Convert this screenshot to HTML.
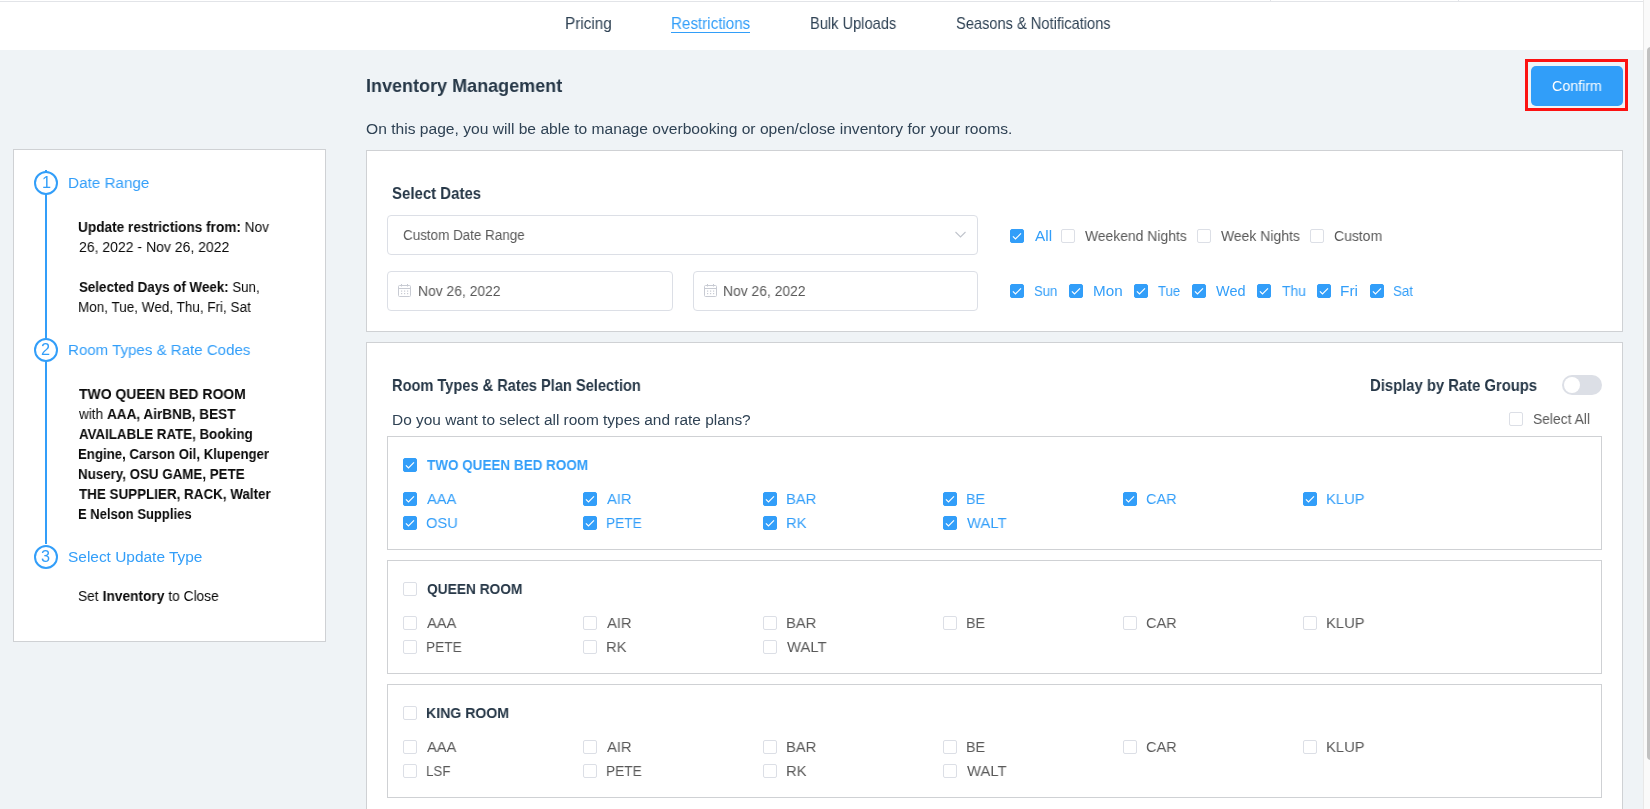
<!DOCTYPE html>
<html><head><meta charset="utf-8"><style>
html,body{margin:0;padding:0;width:1650px;height:809px;overflow:hidden;background:#eff3f6;font-family:"Liberation Sans",sans-serif;}
.abs{position:absolute;}
.t{position:absolute;white-space:nowrap;will-change:transform;}
.t b,.t.sb{font-weight:700}.t{transform-origin:0 0}
.box{position:absolute;box-sizing:border-box;background:#fff;}
.cb{position:absolute;width:14px;height:14px;box-sizing:border-box;border:1px solid #dcdfe6;border-radius:2px;background:#fff;}
.cb.on{background:#329ef9;border-color:#329ef9;}
.cb svg{position:absolute;left:-1px;top:-1px;}
</style></head><body>
<div class="box" style="left:0;top:0;width:1643px;height:50px;"></div>
<div class="abs" style="left:0;top:1px;width:1643px;height:1px;background:#e2e4e8"></div>
<div class="abs" style="left:1270px;top:0;width:1px;height:2px;background:#e2e4e8"></div>
<div class="abs" style="left:1458px;top:0;width:1px;height:2px;background:#e2e4e8"></div>
<div class="abs" style="left:671px;top:31.5px;width:79px;height:1.2px;background:#329ef9"></div>
<!-- scrollbar -->
<div class="abs" style="left:1643px;top:0;width:7px;height:809px;background:#fafafa;border-left:1px solid #e8e8e8;box-sizing:border-box"></div>
<div class="abs" style="left:1647px;top:47px;width:8px;height:713px;background:#c1c1c1;border-radius:4px"></div>
<!-- sidebar -->
<div class="box" style="left:13px;top:149px;width:313px;height:493px;border:1px solid #cfd1d4"></div>
<div class="abs" style="left:45px;top:170px;width:2px;height:374px;background:#329ef9"></div>
<div class="abs" style="left:34px;top:170.5px;width:24px;height:24px;box-sizing:border-box;border:2px solid #329ef9;border-radius:50%;background:#fff"></div>
<div class="abs" style="left:34px;top:337.6px;width:24px;height:24px;box-sizing:border-box;border:2px solid #329ef9;border-radius:50%;background:#fff"></div>
<div class="abs" style="left:34px;top:544.6px;width:24px;height:24px;box-sizing:border-box;border:2px solid #329ef9;border-radius:50%;background:#fff"></div>
<!-- confirm -->
<div class="abs" style="left:1525px;top:59px;width:103px;height:52px;box-sizing:border-box;border:3px solid #fc1212"></div>
<div class="abs" style="left:1531px;top:66px;width:92px;height:40px;border-radius:5px;background:#319ef9"></div>
<!-- select dates card -->
<div class="box" style="left:366px;top:150px;width:1257px;height:182px;border:1px solid #cfd1d4"></div>
<div class="box" style="left:387px;top:215px;width:591px;height:40px;border:1px solid #dcdfe6;border-radius:4px"></div>
<svg class="abs" style="left:954px;top:230px" width="13" height="9" viewBox="0 0 13 9"><path d="M1.5 2 L6.5 7 L11.5 2" fill="none" stroke="#c0c4cc" stroke-width="1.1"/></svg>
<div class="box" style="left:387px;top:271px;width:286px;height:40px;border:1px solid #dcdfe6;border-radius:4px"></div>
<div class="box" style="left:693px;top:271px;width:285px;height:40px;border:1px solid #dcdfe6;border-radius:4px"></div>
<svg class='abs' style='left:398px;top:284px' width='13' height='13' viewBox='0 0 13 13'><rect x='0.5' y='1.5' width='12' height='11' rx='1' fill='none' stroke='#c8cbd3'/><line x1='0.5' y1='4.5' x2='12.5' y2='4.5' stroke='#c8cbd3'/><line x1='3.5' y1='0' x2='3.5' y2='2.5' stroke='#c8cbd3'/><line x1='9.5' y1='0' x2='9.5' y2='2.5' stroke='#c8cbd3'/><g fill='#c8cbd3'><rect x='3' y='6.5' width='1.2' height='1.2'/><rect x='6' y='6.5' width='1.2' height='1.2'/><rect x='9' y='6.5' width='1.2' height='1.2'/><rect x='3' y='9' width='1.2' height='1.2'/><rect x='6' y='9' width='1.2' height='1.2'/><rect x='9' y='9' width='1.2' height='1.2'/></g></svg><svg class='abs' style='left:703.6px;top:284px' width='13' height='13' viewBox='0 0 13 13'><rect x='0.5' y='1.5' width='12' height='11' rx='1' fill='none' stroke='#c8cbd3'/><line x1='0.5' y1='4.5' x2='12.5' y2='4.5' stroke='#c8cbd3'/><line x1='3.5' y1='0' x2='3.5' y2='2.5' stroke='#c8cbd3'/><line x1='9.5' y1='0' x2='9.5' y2='2.5' stroke='#c8cbd3'/><g fill='#c8cbd3'><rect x='3' y='6.5' width='1.2' height='1.2'/><rect x='6' y='6.5' width='1.2' height='1.2'/><rect x='9' y='6.5' width='1.2' height='1.2'/><rect x='3' y='9' width='1.2' height='1.2'/><rect x='6' y='9' width='1.2' height='1.2'/><rect x='9' y='9' width='1.2' height='1.2'/></g></svg>
<!-- room card -->
<div class="box" style="left:366px;top:342px;width:1257px;height:500px;border:1px solid #cfd1d4"></div>
<div class="abs" style="left:1562px;top:375px;width:40px;height:20px;border-radius:10px;background:#dcdfe6"></div>
<div class="abs" style="left:1564px;top:377px;width:16px;height:16px;border-radius:50%;background:#fff"></div>
<div class="box" style="left:387px;top:436px;width:1215px;height:114px;border:1px solid #cfd1d4"></div>
<div class="box" style="left:387px;top:560px;width:1215px;height:114px;border:1px solid #cfd1d4"></div>
<div class="box" style="left:387px;top:684px;width:1215px;height:114px;border:1px solid #cfd1d4"></div>
<div class='cb on' style='left:1010px;top:229px'><svg width='14' height='14' viewBox='0 0 14 14'><path d='M2.9 7.3 L5.5 10.0 L11 4.3' fill='none' stroke='#fff' stroke-width='1.15'/></svg></div><div class='cb' style='left:1061px;top:229px'></div><div class='cb' style='left:1197px;top:229px'></div><div class='cb' style='left:1310px;top:229px'></div><div class='cb on' style='left:1010px;top:284px'><svg width='14' height='14' viewBox='0 0 14 14'><path d='M2.9 7.3 L5.5 10.0 L11 4.3' fill='none' stroke='#fff' stroke-width='1.15'/></svg></div><div class='cb on' style='left:1069px;top:284px'><svg width='14' height='14' viewBox='0 0 14 14'><path d='M2.9 7.3 L5.5 10.0 L11 4.3' fill='none' stroke='#fff' stroke-width='1.15'/></svg></div><div class='cb on' style='left:1134px;top:284px'><svg width='14' height='14' viewBox='0 0 14 14'><path d='M2.9 7.3 L5.5 10.0 L11 4.3' fill='none' stroke='#fff' stroke-width='1.15'/></svg></div><div class='cb on' style='left:1192px;top:284px'><svg width='14' height='14' viewBox='0 0 14 14'><path d='M2.9 7.3 L5.5 10.0 L11 4.3' fill='none' stroke='#fff' stroke-width='1.15'/></svg></div><div class='cb on' style='left:1257px;top:284px'><svg width='14' height='14' viewBox='0 0 14 14'><path d='M2.9 7.3 L5.5 10.0 L11 4.3' fill='none' stroke='#fff' stroke-width='1.15'/></svg></div><div class='cb on' style='left:1317px;top:284px'><svg width='14' height='14' viewBox='0 0 14 14'><path d='M2.9 7.3 L5.5 10.0 L11 4.3' fill='none' stroke='#fff' stroke-width='1.15'/></svg></div><div class='cb on' style='left:1370px;top:284px'><svg width='14' height='14' viewBox='0 0 14 14'><path d='M2.9 7.3 L5.5 10.0 L11 4.3' fill='none' stroke='#fff' stroke-width='1.15'/></svg></div><div class='cb' style='left:1509px;top:412px'></div><div class='cb on' style='left:403px;top:458px'><svg width='14' height='14' viewBox='0 0 14 14'><path d='M2.9 7.3 L5.5 10.0 L11 4.3' fill='none' stroke='#fff' stroke-width='1.15'/></svg></div><div class='cb on' style='left:403px;top:492px'><svg width='14' height='14' viewBox='0 0 14 14'><path d='M2.9 7.3 L5.5 10.0 L11 4.3' fill='none' stroke='#fff' stroke-width='1.15'/></svg></div><div class='cb on' style='left:583px;top:492px'><svg width='14' height='14' viewBox='0 0 14 14'><path d='M2.9 7.3 L5.5 10.0 L11 4.3' fill='none' stroke='#fff' stroke-width='1.15'/></svg></div><div class='cb on' style='left:763px;top:492px'><svg width='14' height='14' viewBox='0 0 14 14'><path d='M2.9 7.3 L5.5 10.0 L11 4.3' fill='none' stroke='#fff' stroke-width='1.15'/></svg></div><div class='cb on' style='left:943px;top:492px'><svg width='14' height='14' viewBox='0 0 14 14'><path d='M2.9 7.3 L5.5 10.0 L11 4.3' fill='none' stroke='#fff' stroke-width='1.15'/></svg></div><div class='cb on' style='left:1123px;top:492px'><svg width='14' height='14' viewBox='0 0 14 14'><path d='M2.9 7.3 L5.5 10.0 L11 4.3' fill='none' stroke='#fff' stroke-width='1.15'/></svg></div><div class='cb on' style='left:1303px;top:492px'><svg width='14' height='14' viewBox='0 0 14 14'><path d='M2.9 7.3 L5.5 10.0 L11 4.3' fill='none' stroke='#fff' stroke-width='1.15'/></svg></div><div class='cb on' style='left:403px;top:516px'><svg width='14' height='14' viewBox='0 0 14 14'><path d='M2.9 7.3 L5.5 10.0 L11 4.3' fill='none' stroke='#fff' stroke-width='1.15'/></svg></div><div class='cb on' style='left:583px;top:516px'><svg width='14' height='14' viewBox='0 0 14 14'><path d='M2.9 7.3 L5.5 10.0 L11 4.3' fill='none' stroke='#fff' stroke-width='1.15'/></svg></div><div class='cb on' style='left:763px;top:516px'><svg width='14' height='14' viewBox='0 0 14 14'><path d='M2.9 7.3 L5.5 10.0 L11 4.3' fill='none' stroke='#fff' stroke-width='1.15'/></svg></div><div class='cb on' style='left:943px;top:516px'><svg width='14' height='14' viewBox='0 0 14 14'><path d='M2.9 7.3 L5.5 10.0 L11 4.3' fill='none' stroke='#fff' stroke-width='1.15'/></svg></div><div class='cb' style='left:403px;top:582px'></div><div class='cb' style='left:403px;top:616px'></div><div class='cb' style='left:583px;top:616px'></div><div class='cb' style='left:763px;top:616px'></div><div class='cb' style='left:943px;top:616px'></div><div class='cb' style='left:1123px;top:616px'></div><div class='cb' style='left:1303px;top:616px'></div><div class='cb' style='left:403px;top:640px'></div><div class='cb' style='left:583px;top:640px'></div><div class='cb' style='left:763px;top:640px'></div><div class='cb' style='left:403px;top:706px'></div><div class='cb' style='left:403px;top:740px'></div><div class='cb' style='left:583px;top:740px'></div><div class='cb' style='left:763px;top:740px'></div><div class='cb' style='left:943px;top:740px'></div><div class='cb' style='left:1123px;top:740px'></div><div class='cb' style='left:1303px;top:740px'></div><div class='cb' style='left:403px;top:764px'></div><div class='cb' style='left:583px;top:764px'></div><div class='cb' style='left:763px;top:764px'></div><div class='cb' style='left:943px;top:764px'></div>
<div class='t' style='left:564.84px;top:13.97px;font-size:15.96px;line-height:19px;color:#2f4254;transform:scaleX(0.9574)'>Pricing</div><div class='t' style='left:671.05px;top:13.97px;font-size:15.96px;line-height:19px;color:#329ef9;transform:scaleX(0.9512)'>Restrictions</div><div class='t' style='left:809.78px;top:13.97px;font-size:15.96px;line-height:19px;color:#2f4254;transform:scaleX(0.9172)'>Bulk Uploads</div><div class='t' style='left:956.18px;top:13.97px;font-size:15.96px;line-height:19px;color:#2f4254;transform:scaleX(0.9174)'>Seasons &amp; Notifications</div><div class='t sb' style='left:365.75px;top:73.90px;font-size:19.05px;line-height:23px;color:#263747;transform:scaleX(0.9466)'>Inventory Management</div><div class='t' style='left:365.69px;top:119.15px;font-size:15.45px;line-height:19px;color:#2f4254;transform:scaleX(1.0110)'>On this page, you will be able to manage overbooking or open/close inventory for your rooms.</div><div class='t' style='left:1552.20px;top:77.50px;font-size:14.42px;line-height:17px;color:#ffffff;transform:scaleX(0.9860)'>Confirm</div><div class='t sb' style='left:392.10px;top:183.29px;font-size:16.48px;line-height:20px;color:#263747;transform:scaleX(0.9093)'>Select Dates</div><div class='t' style='left:403.20px;top:226.50px;font-size:14.42px;line-height:17px;color:#595959;transform:scaleX(0.9323)'>Custom Date Range</div><div class='t' style='left:417.74px;top:282.50px;font-size:14.42px;line-height:17px;color:#595959;transform:scaleX(0.9619)'>Nov 26, 2022</div><div class='t' style='left:722.84px;top:282.50px;font-size:14.42px;line-height:17px;color:#595959;transform:scaleX(0.9619)'>Nov 26, 2022</div><div class='t' style='left:1034.80px;top:227.50px;font-size:14.42px;line-height:17px;color:#329ef9;transform:scaleX(1.0667)'>All</div><div class='t' style='left:1085.20px;top:227.50px;font-size:14.42px;line-height:17px;color:#595959;transform:scaleX(0.9648)'>Weekend Nights</div><div class='t' style='left:1220.90px;top:227.50px;font-size:14.42px;line-height:17px;color:#595959;transform:scaleX(0.9679)'>Week Nights</div><div class='t' style='left:1334.00px;top:227.50px;font-size:14.42px;line-height:17px;color:#595959;transform:scaleX(0.9694)'>Custom</div><div class='t' style='left:1033.89px;top:282.50px;font-size:14.42px;line-height:17px;color:#329ef9;transform:scaleX(0.9125)'>Sun</div><div class='t' style='left:1092.94px;top:282.50px;font-size:14.42px;line-height:17px;color:#329ef9;transform:scaleX(1.0577)'>Mon</div><div class='t' style='left:1158.00px;top:282.50px;font-size:14.42px;line-height:17px;color:#329ef9;transform:scaleX(0.9125)'>Tue</div><div class='t' style='left:1216.10px;top:282.50px;font-size:14.42px;line-height:17px;color:#329ef9;transform:scaleX(1.0034)'>Wed</div><div class='t' style='left:1281.50px;top:282.50px;font-size:14.42px;line-height:17px;color:#329ef9;transform:scaleX(0.9667)'>Thu</div><div class='t' style='left:1340.43px;top:282.50px;font-size:14.42px;line-height:17px;color:#329ef9;transform:scaleX(1.0667)'>Fri</div><div class='t' style='left:1393.07px;top:282.50px;font-size:14.42px;line-height:17px;color:#329ef9;transform:scaleX(0.9286)'>Sat</div><div class='t sb' style='left:391.71px;top:375.29px;font-size:16.48px;line-height:20px;color:#263747;transform:scaleX(0.8867)'>Room Types &amp; Rates Plan Selection</div><div class='t' style='left:391.60px;top:410.15px;font-size:15.45px;line-height:19px;color:#2f4254'>Do you want to select all room types and rate plans?</div><div class='t sb' style='left:1370.20px;top:375.29px;font-size:16.48px;line-height:20px;color:#263747;transform:scaleX(0.8995)'>Display by Rate Groups</div><div class='t' style='left:1532.74px;top:410.50px;font-size:14.42px;line-height:17px;color:#595959;transform:scaleX(0.9621)'>Select All</div><div class='t sb' style='left:427.30px;top:455.15px;font-size:15.45px;line-height:19px;color:#329ef9;transform:scaleX(0.8734)'>TWO QUEEN BED ROOM</div><div class='t' style='left:427.30px;top:489.15px;font-size:15.45px;line-height:19px;color:#329ef9;transform:scaleX(0.9516)'>AAA</div><div class='t' style='left:607.30px;top:489.15px;font-size:15.45px;line-height:19px;color:#329ef9;transform:scaleX(0.9600)'>AIR</div><div class='t' style='left:786.34px;top:489.15px;font-size:15.45px;line-height:19px;color:#329ef9;transform:scaleX(0.9567)'>BAR</div><div class='t' style='left:966.37px;top:489.15px;font-size:15.45px;line-height:19px;color:#329ef9;transform:scaleX(0.9263)'>BE</div><div class='t' style='left:1146.36px;top:489.15px;font-size:15.45px;line-height:19px;color:#329ef9;transform:scaleX(0.9387)'>CAR</div><div class='t' style='left:1326.34px;top:489.15px;font-size:15.45px;line-height:19px;color:#329ef9;transform:scaleX(0.9564)'>KLUP</div><div class='t' style='left:426.35px;top:513.15px;font-size:15.45px;line-height:19px;color:#329ef9;transform:scaleX(0.9516)'>OSU</div><div class='t' style='left:606.41px;top:513.15px;font-size:15.45px;line-height:19px;color:#329ef9;transform:scaleX(0.8872)'>PETE</div><div class='t' style='left:786.34px;top:513.15px;font-size:15.45px;line-height:19px;color:#329ef9;transform:scaleX(0.9550)'>RK</div><div class='t' style='left:967.30px;top:513.15px;font-size:15.45px;line-height:19px;color:#329ef9;transform:scaleX(0.9610)'>WALT</div><div class='t sb' style='left:427.30px;top:579.15px;font-size:15.45px;line-height:19px;color:#263747;transform:scaleX(0.8906)'>QUEEN ROOM</div><div class='t' style='left:427.30px;top:613.15px;font-size:15.45px;line-height:19px;color:#595959;transform:scaleX(0.9516)'>AAA</div><div class='t' style='left:607.30px;top:613.15px;font-size:15.45px;line-height:19px;color:#595959;transform:scaleX(0.9600)'>AIR</div><div class='t' style='left:786.34px;top:613.15px;font-size:15.45px;line-height:19px;color:#595959;transform:scaleX(0.9567)'>BAR</div><div class='t' style='left:966.37px;top:613.15px;font-size:15.45px;line-height:19px;color:#595959;transform:scaleX(0.9263)'>BE</div><div class='t' style='left:1146.36px;top:613.15px;font-size:15.45px;line-height:19px;color:#595959;transform:scaleX(0.9387)'>CAR</div><div class='t' style='left:1326.34px;top:613.15px;font-size:15.45px;line-height:19px;color:#595959;transform:scaleX(0.9564)'>KLUP</div><div class='t' style='left:426.41px;top:637.15px;font-size:15.45px;line-height:19px;color:#595959;transform:scaleX(0.8872)'>PETE</div><div class='t' style='left:606.34px;top:637.15px;font-size:15.45px;line-height:19px;color:#595959;transform:scaleX(0.9550)'>RK</div><div class='t' style='left:787.30px;top:637.15px;font-size:15.45px;line-height:19px;color:#595959;transform:scaleX(0.9610)'>WALT</div><div class='t sb' style='left:426.39px;top:703.15px;font-size:15.45px;line-height:19px;color:#263747;transform:scaleX(0.9135)'>KING ROOM</div><div class='t' style='left:427.30px;top:737.15px;font-size:15.45px;line-height:19px;color:#595959;transform:scaleX(0.9516)'>AAA</div><div class='t' style='left:607.30px;top:737.15px;font-size:15.45px;line-height:19px;color:#595959;transform:scaleX(0.9600)'>AIR</div><div class='t' style='left:786.34px;top:737.15px;font-size:15.45px;line-height:19px;color:#595959;transform:scaleX(0.9567)'>BAR</div><div class='t' style='left:966.37px;top:737.15px;font-size:15.45px;line-height:19px;color:#595959;transform:scaleX(0.9263)'>BE</div><div class='t' style='left:1146.36px;top:737.15px;font-size:15.45px;line-height:19px;color:#595959;transform:scaleX(0.9387)'>CAR</div><div class='t' style='left:1326.34px;top:737.15px;font-size:15.45px;line-height:19px;color:#595959;transform:scaleX(0.9564)'>KLUP</div><div class='t' style='left:426.44px;top:761.15px;font-size:15.45px;line-height:19px;color:#595959;transform:scaleX(0.8630)'>LSF</div><div class='t' style='left:606.41px;top:761.15px;font-size:15.45px;line-height:19px;color:#595959;transform:scaleX(0.8872)'>PETE</div><div class='t' style='left:786.34px;top:761.15px;font-size:15.45px;line-height:19px;color:#595959;transform:scaleX(0.9550)'>RK</div><div class='t' style='left:967.30px;top:761.15px;font-size:15.45px;line-height:19px;color:#595959;transform:scaleX(0.9610)'>WALT</div><div class='t' style='left:68.01px;top:173.15px;font-size:15.45px;line-height:19px;color:#329ef9;transform:scaleX(0.9877)'>Date Range</div><div class='t' style='left:78.05px;top:218.50px;font-size:14.42px;line-height:17px;color:#0a0a0a;transform:scaleX(0.9468)'><b>Update restrictions from:</b> Nov</div><div class='t' style='left:79.00px;top:238.50px;font-size:14.42px;line-height:17px;color:#0a0a0a;transform:scaleX(0.9727)'>26, 2022 - Nov 26, 2022</div><div class='t' style='left:78.50px;top:278.50px;font-size:14.42px;line-height:17px;color:#0a0a0a;transform:scaleX(0.9263)'><b>Selected Days of Week:</b> Sun,</div><div class='t' style='left:78.06px;top:298.50px;font-size:14.42px;line-height:17px;color:#0a0a0a;transform:scaleX(0.9370)'>Mon, Tue, Wed, Thu, Fri, Sat</div><div class='t' style='left:68.02px;top:340.15px;font-size:15.45px;line-height:19px;color:#329ef9;transform:scaleX(0.9762)'>Room Types &amp; Rate Codes</div><div class='t' style='left:78.60px;top:385.50px;font-size:14.42px;line-height:17px;color:#0a0a0a;transform:scaleX(0.9696)'><b>TWO QUEEN BED ROOM</b></div><div class='t' style='left:78.60px;top:405.50px;font-size:14.42px;line-height:17px;color:#0a0a0a;transform:scaleX(0.9428)'>with <b>AAA, AirBNB, BEST</b></div><div class='t' style='left:78.60px;top:425.50px;font-size:14.42px;line-height:17px;color:#0a0a0a;transform:scaleX(0.9235)'><b>AVAILABLE RATE, Booking</b></div><div class='t' style='left:77.68px;top:445.50px;font-size:14.42px;line-height:17px;color:#0a0a0a;transform:scaleX(0.9179)'><b>Engine, Carson Oil, Klupenger</b></div><div class='t' style='left:77.67px;top:465.50px;font-size:14.42px;line-height:17px;color:#0a0a0a;transform:scaleX(0.9263)'><b>Nusery, OSU GAME, PETE</b></div><div class='t' style='left:78.60px;top:485.50px;font-size:14.42px;line-height:17px;color:#0a0a0a;transform:scaleX(0.9311)'><b>THE SUPPLIER, RACK, Walter</b></div><div class='t' style='left:77.70px;top:505.50px;font-size:14.42px;line-height:17px;color:#0a0a0a;transform:scaleX(0.9032)'><b>E Nelson Supplies</b></div><div class='t' style='left:42.00px;top:172.36px;font-size:16.27px;line-height:20px;color:#329ef9'>1</div><div class='t' style='left:41.00px;top:339.36px;font-size:16.27px;line-height:20px;color:#329ef9'>2</div><div class='t' style='left:40.80px;top:546.36px;font-size:16.27px;line-height:20px;color:#329ef9'>3</div><div class='t' style='left:67.80px;top:547.15px;font-size:15.45px;line-height:19px;color:#329ef9'>Select Update Type</div><div class='t' style='left:77.64px;top:587.50px;font-size:14.42px;line-height:17px;color:#0a0a0a;transform:scaleX(0.9555)'>Set <b>Inventory</b> to Close</div>
</body></html>
